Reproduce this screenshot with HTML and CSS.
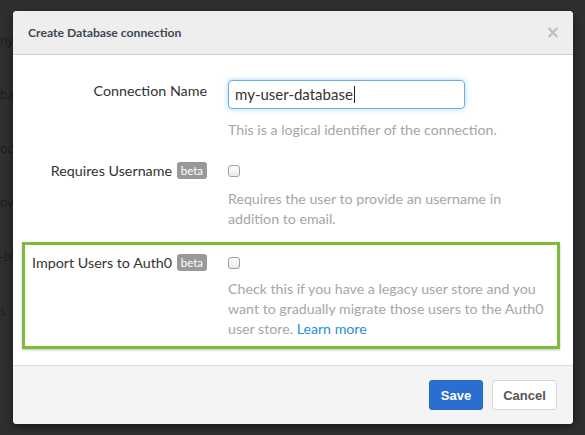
FILE: index.html
```html
<!DOCTYPE html>
<html>
<head>
<meta charset="utf-8">
<link rel="stylesheet" href="styles.css">
</head>
<body>
<div class="page">
  <div class="page-nav">
    <span class="frag">ny</span>
    <span class="frag">bar</span>
    <span class="frag">ocs</span>
    <span class="frag">ov</span>
    <span class="frag">-bl</span>
    <span class="frag">s</span>
  </div>
</div>
<div class="modal">
  <div class="modal-header">
    <h3 class="modal-title">Create Database connection</h3>
    <span class="close">&times;</span>
  </div>
  <div class="modal-body">
    <div class="row first">
      <div class="label">Connection Name</div>
      <div class="control">
        <div class="text-input">my-user-database<span class="caret"></span></div>
        <p class="help help-first">This is a logical identifier of the connection.</p>
      </div>
    </div>
    <div class="row">
      <div class="label">Requires Username <span class="badge">beta</span></div>
      <div class="control">
        <div class="check-line"><input type="checkbox" class="check"></div>
        <p class="help">Requires the user to provide an username in addition to email.</p>
      </div>
    </div>
    <div class="row highlight">
      <div class="label">Import Users to Auth0 <span class="badge">beta</span></div>
      <div class="control">
        <div class="check-line"><input type="checkbox" class="check"></div>
        <p class="help">Check this if you have a legacy user store and you want to gradually migrate those users to the Auth0 user store. <a class="link" href="#">Learn more</a></p>
      </div>
    </div>
  </div>
  <div class="modal-footer">
    <button class="btn btn-primary">Save</button>
    <button class="btn btn-default">Cancel</button>
  </div>
</div>
</body>
</html>
```
FILE: styles.css
```css
* { box-sizing: border-box; }
html, body {
  margin: 0;
  padding: 0;
  height: 100%;
}
body {
  background: #2f2f2f;
  font-family: "Lato", "Open Sans", sans-serif;
  overflow: hidden;
  position: relative;
}
.page-nav {
  display: flex;
  flex-direction: column;
  align-items: flex-start;
  padding-top: 32px;
  font-family: "Open Sans", sans-serif;
  font-size: 12px;
  color: #1c1c1c;
  line-height: 18px;
}
.frag { display: block; height: 54px; white-space: nowrap; }

.modal {
  position: absolute;
  left: 13px;
  top: 11px;
  width: 560px;
  height: 413px;
  background: #fff;
  border-radius: 4px;
  box-shadow: 0 3px 9px rgba(0,0,0,0.5);
  display: flex;
  flex-direction: column;
  overflow: hidden;
}
.modal-header {
  height: 44px;
  background: #eeeeee;
  border-bottom: 1px solid #cfcfcf;
  display: flex;
  align-items: center;
  justify-content: space-between;
  padding: 0 15px 0 15px;
  flex: none;
}
.modal-title {
  margin: 0;
  font-size: 12.2px;
  font-weight: 700;
  color: #3e4756;
}
.close {
  font-family: "DejaVu Sans", sans-serif;
  font-size: 17px;
  font-weight: 700;
  color: #bdbdbd;
  line-height: 1;
  margin-top: -1px;
  margin-right: -2px;
}
.modal-body {
  flex: 1;
  padding: 14px 13px 0 9px;
  display: flex;
  flex-direction: column;
  gap: 2px;
}
.row {
  display: grid;
  grid-template-columns: 182px 1fr;
  column-gap: 21px;
  border: 3px solid transparent;
  padding: 8px 0 5px 0;
}
.row.highlight {
  border-color: #7cbb3e;
  margin-top: 3px;
  padding-bottom: 7px;
  box-shadow: 0 1px 2px rgba(0,0,0,0.25);
}
.label {
  font-size: 14.3px;
  color: #333;
  line-height: 20px;
  text-align: right;
  white-space: nowrap;
}
.row.first .label { padding-top: 1px; }
.badge {
  display: inline-block;
  background: #999;
  color: #fff;
  font-size: 11.5px;
  line-height: 17px;
  height: 17px;
  padding: 0 4px;
  border-radius: 3px;
  vertical-align: 1px;
  margin-left: 1px;
}
.text-input {
  width: 237px;
  height: 29px;
  border: 1px solid #66afe9;
  border-radius: 4px;
  box-shadow: 0 0 5px rgba(102,175,233,0.55);
  font-size: 15px;
  color: #333;
  line-height: 27px;
  padding: 0 6px;
  white-space: nowrap;
}
.caret {
  display: inline-block;
  width: 1px;
  height: 17px;
  background: #222;
  vertical-align: -3px;
  margin-left: 1px;
}
.help {
  margin: 8px 0 0 0;
  max-width: 320px;
  font-size: 14.2px;
  line-height: 20px;
  color: #a6a6a6;
}
.help-first { margin-top: 11px; }
.row.highlight .help { margin-top: 6px; }
.check-line {
  height: 20px;
  display: flex;
  align-items: center;
}
.check {
  appearance: none;
  -webkit-appearance: none;
  margin: 0;
  width: 12px;
  height: 12px;
  border: 1px solid #a0a0a0;
  border-radius: 3px;
  background: linear-gradient(#ffffff, #ececec);
}
.link { color: #2a8fd6; text-decoration: none; }

.modal-footer {
  flex: none;
  height: 59px;
  background: #f4f4f4;
  border-top: 1px solid #dcdcdc;
  display: flex;
  justify-content: flex-end;
  align-items: flex-start;
  gap: 9px;
  padding: 14px 16px 0 0;
}
.btn {
  height: 30px;
  border-radius: 3px;
  font-family: "Liberation Sans", Arial, sans-serif;
  font-weight: 700;
  font-size: 13px;
  padding: 0;
  cursor: pointer;
}
.btn-primary {
  width: 54px;
  background: #2a6fcf;
  border: 1px solid #2566c2;
  color: #fff;
}
.btn-default {
  width: 65px;
  background: #fff;
  border: 1px solid #d6d6d6;
  color: #555;
}
```
